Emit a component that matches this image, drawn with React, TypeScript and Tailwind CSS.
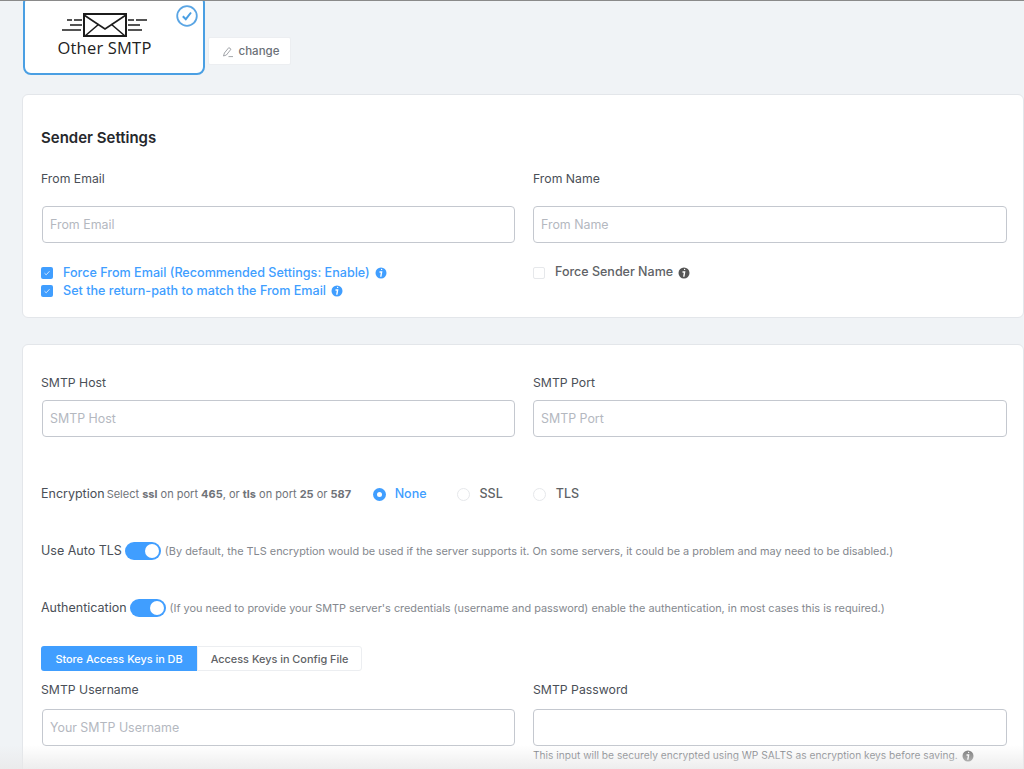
import React from "react";

const Info = ({ color }: { color: string }) => (
  <svg width="12" height="12" viewBox="0 0 12 12" className="shrink-0">
    <circle cx="6" cy="6" r="5.5" fill={color} />
    <path d="M6.6 2.4h.01M5 5h1.6L5.9 9.2" stroke="#fff" strokeWidth="1.4" strokeLinecap="round" fill="none" />
  </svg>
);

const Check = () => (
  <span className="flex h-3 w-3 items-center justify-center rounded-[2px] bg-[#409eff]">
    <svg width="8" height="8" viewBox="0 0 8 8" fill="none">
      <path d="M1.5 4.2 3.2 5.8 6.5 2.2" stroke="#cfe5ff" strokeWidth="1" />
    </svg>
  </span>
);

const Input = ({ placeholder, left, gap }: { placeholder?: string; left?: boolean; gap: string }) => (
  <input
    readOnly
    placeholder={placeholder}
    className={
      "block h-[37px] rounded-[4px] border border-[#c4c8cf] bg-white px-[7px] text-[12.4px] text-[#333] outline-none placeholder:text-[#b4b8bf] " +
      gap +
      (left ? " ml-px w-[473px]" : " w-[474px]")
    }
  />
);

const Field = ({ label, placeholder, left, gap }: { label: string; placeholder?: string; left?: boolean; gap: string }) => (
  <div>
    <div className="text-[12.25px] leading-4 text-[#4a4f57]">{label}</div>
    <Input placeholder={placeholder} left={left} gap={gap} />
  </div>
);

const Toggle = () => (
  <span className="flex h-[18px] w-[36px] shrink-0 items-center justify-end rounded-full bg-[#409eff] pr-[2px]">
    <span className="h-[14px] w-[14px] rounded-full bg-white" />
  </span>
);

const Radio = ({ on, label }: { on?: boolean; label: string }) => (
  <span className={"flex items-center " + (on ? "gap-[9px]" : "gap-[10px]")}>
    {on ? (
      <span className="flex h-[13px] w-[13px] items-center justify-center rounded-full bg-[#409eff]">
        <span className="h-[5px] w-[5px] rounded-full bg-white" />
      </span>
    ) : (
      <span className="h-[13px] w-[13px] rounded-full border border-[#e6e8eb] bg-white" />
    )}
    <span className={"text-[12.5px] font-medium " + (on ? "text-[#409eff]" : "text-[#606266]")}>{label}</span>
  </span>
);

export default function App() {
  return (
    <div
      className="relative h-[769px] w-[1024px] overflow-hidden border-t border-[#8a8a8a] bg-[#f0f3f6]"
      style={{ fontFamily: "Inter, 'Liberation Sans', sans-serif" }}
    >
      <div className="flex items-start pl-[23px]">
        <div className="relative -mt-[6px] flex h-[80px] w-[182px] flex-col items-center rounded-[8px] border-2 border-[#4a9fe3] bg-white pr-[19px] pt-[16px]">
          <svg width="88" height="26" viewBox="0 0 88 26" fill="none" stroke="#1c1c1c" className="block">
            <rect x="23" y="1" width="42" height="22" strokeWidth="2" />
            <path d="M23 2 44 16 65 2M24 23 38 11M64 23 50 11" strokeWidth="1.6" />
            <path d="M6 7h5M13 7h8M9 12h12M1 17h19M67 7h6M75 7h11M67 12h12M67 17h14" strokeWidth="1.5" />
          </svg>
          <span className="-mt-[1px] text-[16.5px] leading-5 tracking-[0.2px] text-[#222]" style={{ fontFamily: "'Open Sans', sans-serif" }}>
            Other SMTP
          </span>
          <svg width="22" height="22" viewBox="0 0 22 22" fill="none" className="absolute right-[5px] top-[8px]">
            <circle cx="11" cy="11" r="9.8" stroke="#5aa5e4" strokeWidth="1.8" />
            <path d="M6.8 11.2 9.8 14.2 15 7.5" stroke="#4a9fe3" strokeWidth="2" />
          </svg>
        </div>
        <div className="ml-[3px] mt-[36px] flex h-[28px] w-[83px] items-center justify-center gap-[5px] rounded-[2px] border border-[#eceef1] bg-white pt-[1px] text-[11.5px] font-medium text-[#6b7077]">
          <svg width="12" height="12" viewBox="0 0 12 12" fill="none" stroke="#8a8e94" strokeWidth="0.8" className="ml-[2px]">
            <path d="M1.5 10 2.4 7 6.8 1.6 9 3.2 4.4 9 1.5 10ZM6.5 10.6H11" />
          </svg>
          change
        </div>
      </div>

      <div className="ml-[22px] mt-[19px] h-[224px] w-[1002px] rounded-[6px] border border-[#e3e6ea] bg-white pl-[18px] pr-[16px] pt-[33px]">
        <h2 className="text-[15px] font-semibold leading-5 text-[#26282c]">Sender Settings</h2>
        <div className="mt-[23px] grid grid-cols-2 gap-x-[18px]">
          <Field left label="From Email" placeholder="From Email" gap="mt-[19px]" />
          <Field label="From Name" placeholder="From Name" gap="mt-[19px]" />
          <div className="mt-[22px] flex flex-col gap-[3px] text-[12.6px] font-medium leading-[15px] text-[#409eff]">
            <div className="flex items-center gap-[10px]">
              <Check />
              <span>Force From Email (Recommended Settings: Enable)</span>
              <span className="-ml-[5px]"><Info color="#409eff" /></span>
            </div>
            <div className="flex items-center gap-[10px]">
              <Check />
              <span>Set the return-path to match the From Email</span>
              <span className="-ml-[5px]"><Info color="#409eff" /></span>
            </div>
          </div>
          <div className="mt-[22px] flex h-[15px] items-center gap-[10px] text-[12.5px] font-medium text-[#606266]">
            <span className="h-3 w-3 rounded-[2px] border border-[#e6e8eb] bg-white" />
            <span>Force Sender Name</span>
            <span className="-ml-[5px]"><Info color="#555" /></span>
          </div>
        </div>
      </div>

      <div className="ml-[22px] mt-[26px] h-[460px] w-[1002px] rounded-[6px] border border-[#e3e6ea] bg-white pl-[18px] pr-[16px] pt-[30px]">
        <div className="grid grid-cols-2 gap-x-[18px]">
          <Field left label="SMTP Host" placeholder="SMTP Host" gap="mt-[9px]" />
          <Field label="SMTP Port" placeholder="SMTP Port" gap="mt-[9px]" />
        </div>

        <div className="mt-[48px] flex h-[18px] items-center">
          <span className="text-[12.5px] text-[#4a4f57]">Encryption</span>
          <span className="ml-[2px] w-[266px] text-[11px] text-[#6f7379]">
            Select <b className="font-bold">ssl</b> on port <b className="font-bold">465</b>, or <b className="font-bold">tls</b> on port <b className="font-bold">25</b> or <b className="font-bold">587</b>
          </span>
          <span className="flex gap-[30px]">
            <Radio on label="None" />
            <Radio label="SSL" />
            <Radio label="TLS" />
          </span>
        </div>

        <div className="mt-[39px] flex h-[18px] items-center gap-[3px]">
          <span className="text-[12.5px] text-[#4a4f57]">Use Auto TLS</span>
          <Toggle />
          <span className="ml-[1px] text-[10.9px] text-[#84888e]">
            (By default, the TLS encryption would be used if the server supports it. On some servers, it could be a problem and may need to be disabled.)
          </span>
        </div>

        <div className="mt-[39px] flex h-[18px] items-center gap-[3px]">
          <span className="text-[12.5px] text-[#4a4f57]">Authentication</span>
          <Toggle />
          <span className="ml-[1px] text-[10.9px] text-[#84888e]">
            (If you need to provide your SMTP server's credentials (username and password) enable the authentication, in most cases this is required.)
          </span>
        </div>

        <div className="mt-[29px] flex h-[25px] w-[321px] text-[10.9px] font-medium">
          <span className="flex w-[156px] items-center justify-center rounded-l-[3px] bg-[#409eff] pt-[1px] text-white">Store Access Keys in DB</span>
          <span className="flex flex-1 items-center justify-center rounded-r-[3px] border border-[#eceef1] bg-white pt-[1px] text-[#606266]">Access Keys in Config File</span>
        </div>

        <div className="mt-[11px] grid grid-cols-2 gap-x-[18px]">
          <Field left label="SMTP Username" placeholder="Your SMTP Username" gap="mt-[11px]" />
          <div>
            <Field label="SMTP Password" gap="mt-[11px]" />
            <div className="mt-[2px] flex items-center gap-[4px] text-[10.2px] text-[#6f7379]">
              This input will be securely encrypted using WP SALTS as encryption keys before saving.
              <Info color="#6b6b6b" />
            </div>
          </div>
        </div>
      </div>

      <div className="pointer-events-none absolute bottom-0 left-0 h-[24px] w-full bg-gradient-to-b from-transparent to-[#e9e9e9]/80" />
    </div>
  );
}
